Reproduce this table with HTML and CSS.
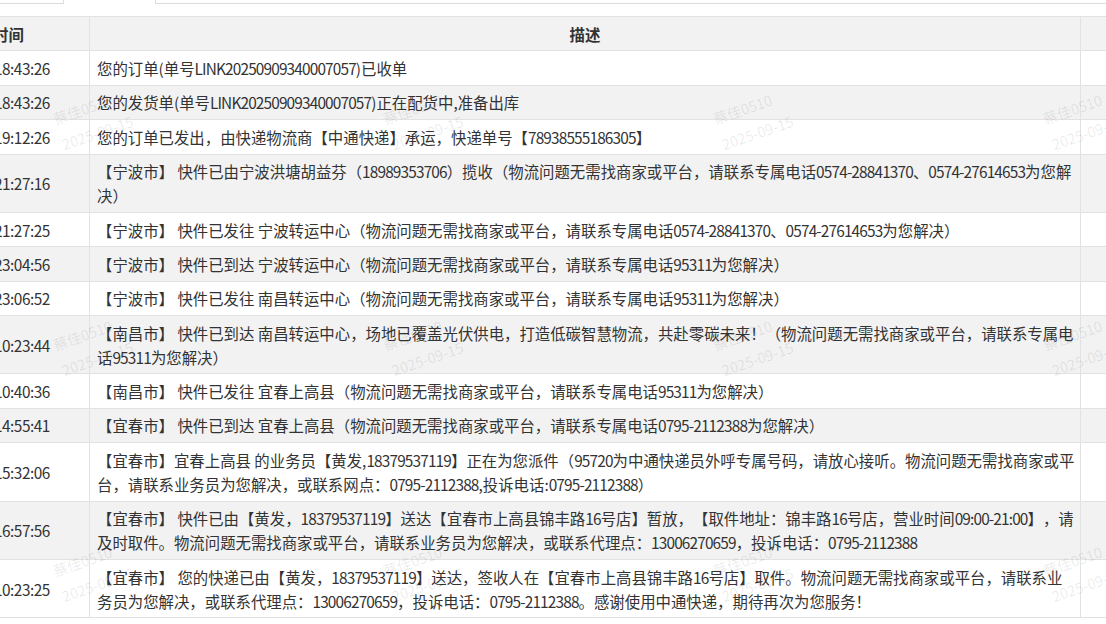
FILE: index.html
```html
<!DOCTYPE html>
<html lang="zh-CN">
<head>
<meta charset="utf-8">
<title>物流轨迹</title>
<link rel="stylesheet" href="styles.css">
</head>
<body>
<div class="page">
  <div class="topbar">
    <div class="tb-box tb-left"></div>
    <div class="tb-box tb-right"></div>
  </div>
  <table class="trace">
    <colgroup>
      <col class="c-time">
      <col class="c-desc">
      <col class="c-extra">
    </colgroup>
    <thead>
      <tr><th class="th-time">时间</th><th class="th-desc">描述</th><th></th></tr>
    </thead>
    <tbody>
      <tr><td class="time">18:43:26</td><td class="desc">您的订单(单号<span class="num">LINK20250909340007057</span>)已收单</td><td></td></tr>
      <tr><td class="time">18:43:26</td><td class="desc">您的发货单(单号<span class="num">LINK20250909340007057</span>)正在配货中,准备出库</td><td></td></tr>
      <tr><td class="time">19:12:26</td><td class="desc">您的订单已发出，由快递物流商【中通快递】承运，快递单号【<span class="num">78938555186305</span>】</td><td></td></tr>
      <tr><td class="time">21:27:16</td><td class="desc">【宁波市】 快件已由宁波洪塘胡益芬（<span class="num">18989353706</span>）揽收（物流问题无需找商家或平台，请联系专属电话<span class="num">0574-28841370</span>、<span class="num">0574-27614653</span>为您解<br>决）</td><td></td></tr>
      <tr><td class="time">21:27:25</td><td class="desc">【宁波市】 快件已发往 宁波转运中心（物流问题无需找商家或平台，请联系专属电话<span class="num">0574-28841370</span>、<span class="num">0574-27614653</span>为您解决）</td><td></td></tr>
      <tr><td class="time">23:04:56</td><td class="desc">【宁波市】 快件已到达 宁波转运中心（物流问题无需找商家或平台，请联系专属电话<span class="num">95311</span>为您解决）</td><td></td></tr>
      <tr><td class="time">23:06:52</td><td class="desc">【宁波市】 快件已发往 南昌转运中心（物流问题无需找商家或平台，请联系专属电话<span class="num">95311</span>为您解决）</td><td></td></tr>
      <tr><td class="time">10:23:44</td><td class="desc">【南昌市】 快件已到达 南昌转运中心，场地已覆盖光伏供电，打造低碳智慧物流，共赴零碳未来！（物流问题无需找商家或平台，请联系专属电<br>话<span class="num">95311</span>为您解决）</td><td></td></tr>
      <tr><td class="time">10:40:36</td><td class="desc">【南昌市】 快件已发往 宜春上高县（物流问题无需找商家或平台，请联系专属电话<span class="num">95311</span>为您解决）</td><td></td></tr>
      <tr><td class="time">14:55:41</td><td class="desc">【宜春市】 快件已到达 宜春上高县（物流问题无需找商家或平台，请联系专属电话<span class="num">0795-2112388</span>为您解决）</td><td></td></tr>
      <tr><td class="time">15:32:06</td><td class="desc">【宜春市】宜春上高县 的业务员【黄发,<span class="num">18379537119</span>】正在为您派件（<span class="num">95720</span>为中通快递员外呼专属号码，请放心接听。物流问题无需找商家或平<br>台，请联系业务员为您解决，或联系网点：<span class="num">0795-2112388</span>,投诉电话:<span class="num">0795-2112388</span>）</td><td></td></tr>
      <tr><td class="time">16:57:56</td><td class="desc">【宜春市】 快件已由【黄发，<span class="num">18379537119</span>】送达【宜春市上高县锦丰路<span class="num">16</span>号店】暂放，【取件地址：锦丰路<span class="num">16</span>号店，营业时间<span class="num">09:00-21:00</span>】，请<br>及时取件。物流问题无需找商家或平台，请联系业务员为您解决，或联系代理点：<span class="num">13006270659</span>，投诉电话：<span class="num">0795-2112388</span></td><td></td></tr>
      <tr><td class="time">10:23:25</td><td class="desc">【宜春市】 您的快递已由【黄发，<span class="num">18379537119</span>】送达，签收人在【宜春市上高县锦丰路<span class="num">16</span>号店】取件。物流问题无需找商家或平台，请联系业<br>务员为您解决，或联系代理点：<span class="num">13006270659</span>，投诉电话：<span class="num">0795-2112388</span>。感谢使用中通快递，期待再次为您服务！</td><td></td></tr>
    </tbody>
  </table>
  <div class="watermarks" aria-hidden="true">
    <div class="wm">蔡佳0510<br>2025-09-15</div>
    <div class="wm">蔡佳0510<br>2025-09-15</div>
    <div class="wm">蔡佳0510<br>2025-09-15</div>
    <div class="wm">蔡佳0510<br>2025-09-15</div>
    <div class="wm">蔡佳0510<br>2025-09-15</div>
    <div class="wm">蔡佳0510<br>2025-09-15</div>
    <div class="wm">蔡佳0510<br>2025-09-15</div>
    <div class="wm">蔡佳0510<br>2025-09-15</div>
    <div class="wm">蔡佳0510<br>2025-09-15</div>
    <div class="wm">蔡佳0510<br>2025-09-15</div>
    <div class="wm">蔡佳0510<br>2025-09-15</div>
    <div class="wm">蔡佳0510<br>2025-09-15</div>
  </div>
</div>
</body>
</html>
```

FILE: styles.css
```css
html, body {
  margin: 0;
  padding: 0;
  background: #ffffff;
}

body {
  width: 1106px;
  height: 624px;
  overflow: hidden;
  font-family: "Noto Sans CJK SC", "Noto Sans", sans-serif;
  font-size: 15.4px;
  color: #333333;
  text-spacing-trim: space-all;
}

.page {
  position: relative;
  height: 624px;
  overflow: hidden;
}

.topbar {
  display: flex;
  height: 4px;
}

.tb-box {
  box-sizing: border-box;
  height: 4px;
  border-bottom: 1px solid #dcdcdc;
}

.tb-left {
  width: 64px;
  border-right: 1px solid #dcdcdc;
}

.tb-right {
  flex: 1;
  margin-left: 91px;
  border-left: 1px solid #dcdcdc;
}

.trace {
  margin-top: 12px;
  margin-left: -12px;
  border-collapse: collapse;
  table-layout: fixed;
  width: 1152px;
}

.c-time { width: 101px; }
.c-desc { width: 991px; }
.c-extra { width: 60px; }

.trace th,
.trace td {
  border: 1px solid #e2e2e2;
  padding: 4.7px 7px;
  line-height: 24px;
  text-align: left;
  vertical-align: middle;
}

.trace .th-time {
  text-indent: -3px;
}

.trace .time {
  letter-spacing: -0.5px;
  text-indent: -2px;
}

.trace .desc {
  white-space: nowrap;
}

.num {
  letter-spacing: -0.85px;
}

.trace th {
  font-weight: bold;
  background: #f2f2f2;
}

.trace .th-desc {
  text-align: center;
}

.trace tbody tr:nth-child(even) td {
  background: #f2f2f2;
}

.watermarks {
  position: absolute;
  inset: 0;
  pointer-events: none;
  display: grid;
  grid-template-columns: repeat(4, 330px);
  grid-auto-rows: 226px;
  padding-left: 49px;
  padding-top: 106px;
}

.wm {
  font-size: 14.5px;
  line-height: 27px;
  color: rgba(0, 0, 0, 0.09);
  white-space: nowrap;
  transform: rotate(-19deg);
  transform-origin: 0 0;
  align-self: start;
  justify-self: start;
}
```
